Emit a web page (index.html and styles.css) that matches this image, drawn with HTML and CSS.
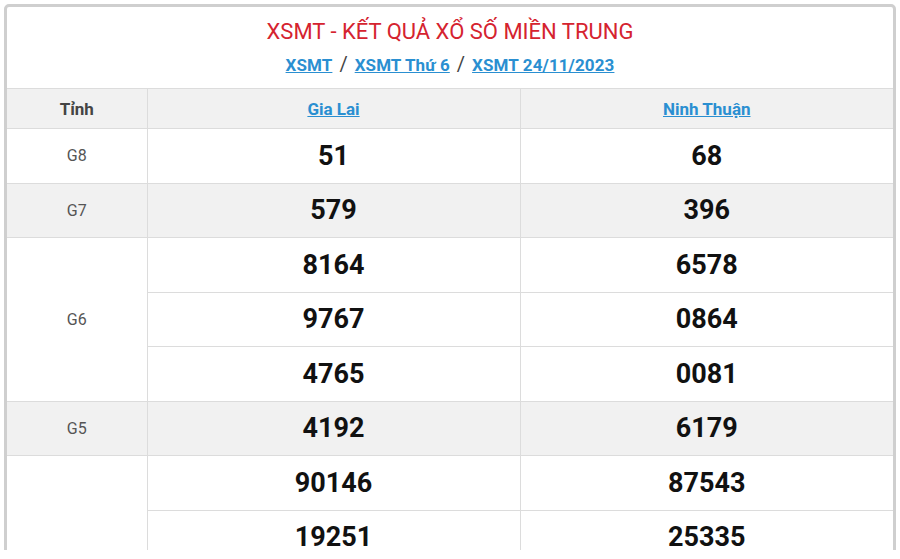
FILE: index.html
```html
<!DOCTYPE html>
<html lang="vi">
<head>
<meta charset="utf-8">
<link rel="stylesheet" href="styles.css">
</head>
<body>
<div class="clip">
  <div class="card">
    <div class="head">
      <h2 class="title">XSMT - KẾT QUẢ XỔ SỐ MIỀN TRUNG</h2>
      <div class="crumbs">
        <a href="#">XSMT</a><span class="sep">/</span><a href="#">XSMT Thứ 6</a><span class="sep">/</span><a href="#">XSMT 24/11/2023</a>
      </div>
    </div>
    <table class="res">
      <colgroup><col class="c1"><col class="c2"><col class="c3"></colgroup>
      <thead>
        <tr><th class="first">Tỉnh</th><th><a href="#">Gia Lai</a></th><th><a href="#">Ninh Thuận</a></th></tr>
      </thead>
      <tbody>
        <tr><td class="lbl first">G8</td><td class="num">51</td><td class="num">68</td></tr>
        <tr class="alt"><td class="lbl first">G7</td><td class="num">579</td><td class="num">396</td></tr>
        <tr><td class="lbl first" rowspan="3">G6</td><td class="num">8164</td><td class="num">6578</td></tr>
        <tr><td class="num">9767</td><td class="num">0864</td></tr>
        <tr><td class="num">4765</td><td class="num">0081</td></tr>
        <tr class="alt"><td class="lbl first">G5</td><td class="num">4192</td><td class="num">6179</td></tr>
        <tr><td class="lbl first" rowspan="2"></td><td class="num">90146</td><td class="num">87543</td></tr>
        <tr><td class="num">19251</td><td class="num">25335</td></tr>
      </tbody>
    </table>
  </div>
</div>
</body>
</html>
```

FILE: styles.css
```css
html, body {
  margin: 0;
  padding: 0;
  background: #fff;
}
body {
  font-family: Roboto, "Noto Sans", Arial, sans-serif;
  color: #222;
}
.clip {
  height: 550px;
  overflow: hidden;
  padding: 4px 4px 0 4px;
  box-sizing: border-box;
}
.card {
  border: 3px solid #cfcfcf;
  border-radius: 5px;
  background: #fff;
}
.head {
  height: 81px;
  box-sizing: border-box;
  padding-top: 12px;
  text-align: center;
}
.title {
  margin: 0;
  font-weight: 400;
  font-size: 22px;
  line-height: 26px;
  color: #d5232f;
}
.crumbs {
  margin-top: 8px;
  font-size: 17px;
  line-height: 22px;
  font-weight: 700;
}
.crumbs a {
  color: #2a8fd1;
  text-decoration: underline;
  letter-spacing: 0.1px;
}
.sep {
  color: #444;
  font-weight: 400;
  font-size: 20px;
  margin: 0 7px;
}
.res {
  width: 100%;
  border-collapse: collapse;
  table-layout: fixed;
}
.c1 { width: 140px; }
.res th, .res td {
  border-top: 1px solid #dcdcdc;
  border-left: 1px solid #dcdcdc;
  text-align: center;
  padding: 0;
}
.res .first { border-left: none; }
.res th {
  height: 39px;
  background: #f1f1f1;
  font-size: 17px;
  font-weight: 700;
  color: #444;
}
.res th a {
  color: #2a8fd1;
  text-decoration: underline;
}
.res td {
  height: 53.5px;
}
.lbl {
  font-size: 16px;
  color: #555;
  background: #fff;
}
.num {
  font-size: 27px;
  font-weight: 700;
  color: #111;
}
.alt td { background: #f1f1f1; }
```
